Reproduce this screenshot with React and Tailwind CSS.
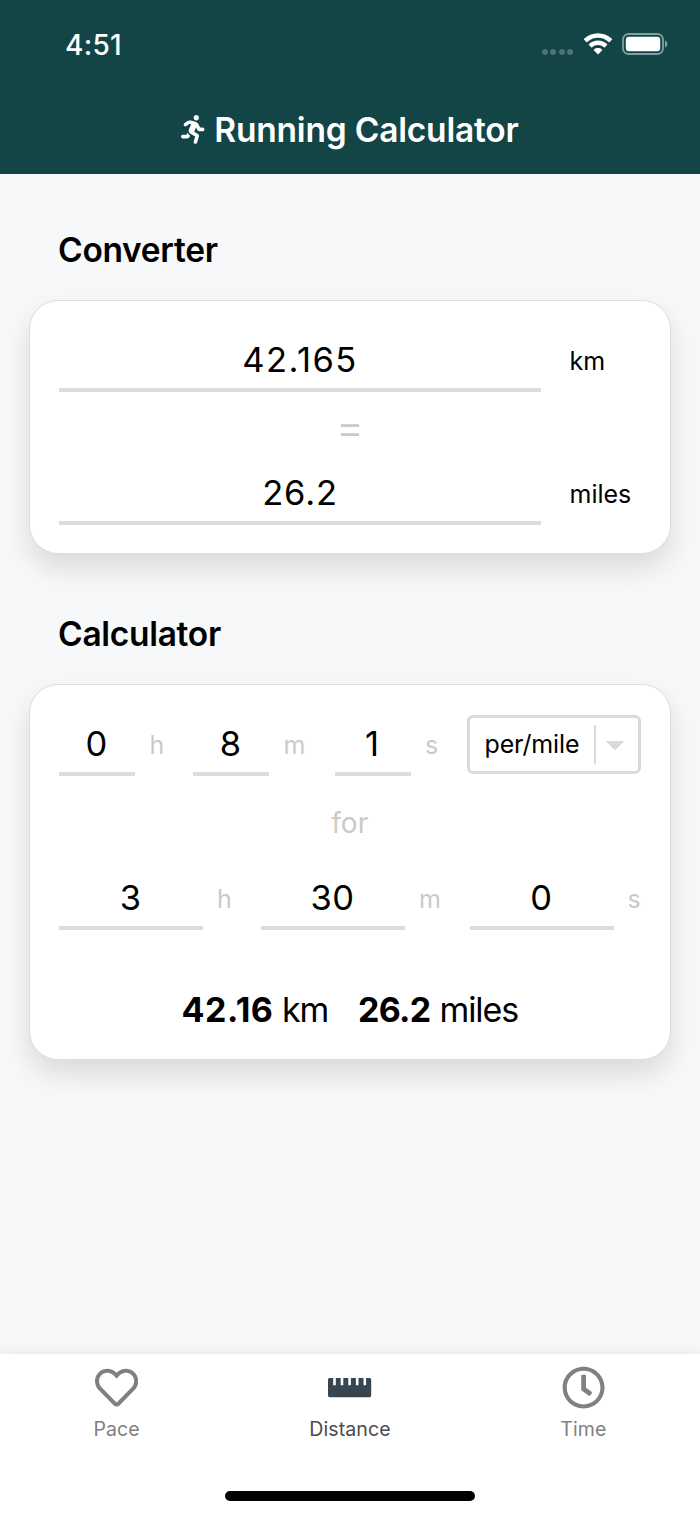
import React from "react";
import { FaRunning, FaRegHeart, FaRegClock } from "react-icons/fa";

function StatusBar() {
  return (
    <div className="flex h-[86px] items-start justify-between pt-[30px] pl-[65px] pr-[32px]">
      <span className="text-[28px] leading-[30px] font-medium tracking-[0.3px]">4:51</span>
      <div className="flex h-[28px] items-center">
        <div className="mr-[10px] mt-[15px] flex gap-[2.3px]">
          {[0, 1, 2, 3].map((i) => (
            <span key={i} className="size-[6px] rounded-full bg-[#4d7475]" />
          ))}
        </div>
        <svg className="mr-[9px] h-[22px] w-[30px]" viewBox="0 0 30 22" fill="#fff">
          <path d="M15 0.2c5.5 0 10.3 2.1 13.9 5.6.3.3.3.7 0 1l-2.200 2.300c-.3.3-.7.3-1 0C22.700 6.300 19 4.800 15 4.800S7.300 6.300 4.300 9.100c-.3.3-.7.3-1 0L1.100 6.800c-.3-.3-.3-.7 0-1C4.700 2.300 9.500.2 15 .2z" />
          <path d="M15 7.600c3.500 0 6.600 1.300 9 3.500.3.3.3.7 0 1l-2.200 2.200c-.3.3-.7.3-1 0-1.600-1.400-3.600-2.200-5.800-2.200s-4.200.8-5.800 2.200c-.3.3-.7.300-1 0L6 12.100c-.3-.3-.3-.7 0-1 2.400-2.200 5.500-3.500 9-3.500z" />
          <path d="M15 15c1.500 0 2.900.5 4 1.400.3.3.3.700 0 1l-3.500 3.600c-.3.3-.7.3-1 0L11 17.400c-.3-.3-.3-.7 0-1 1.100-.9 2.500-1.400 4-1.400z" />
        </svg>
        <svg className="h-[22px] w-[46px]" viewBox="0 0 46 22">
          <rect x="1" y="1" width="40" height="20" rx="5.500" fill="none" stroke="#80a0a1" strokeWidth="1.800" />
          <rect x="3.800" y="3.800" width="34.400" height="14.400" rx="3.200" fill="#fff" />
          <path d="M43 7.500c1.500.6 2.400 2 2.400 3.500s-.9 2.900-2.400 3.500z" fill="#80a0a1" />
        </svg>
      </div>
    </div>
  );
}

function RulerIcon({ className }) {
  return (
    <svg className={className} viewBox="0 0 43.2 43.2" fill="currentColor">
      <path d="M1.600 12H5.200V19.200H7.800V12H12.700V19.200H15.300V12H20.300V19.200H22.900V12H27.900V19.200H30.500V12H35.500V19.200H38.100V12H41.600a1.600 1.600 0 0 1 1.600 1.600V29.600a1.600 1.600 0 0 1-1.600 1.600H1.600a1.600 1.600 0 0 1-1.600-1.600V13.600a1.600 1.600 0 0 1 1.600-1.600z" />
    </svg>
  );
}

function Input({ value, className }) {
  return (
    <div className={`flex h-[61px] items-center justify-center border-b-4 border-[#dcdcdc] text-[34.500px] ${className}`}>
      {value}
    </div>
  );
}

function Unit({ children, className }) {
  return <span className={`flex h-[60px] items-center justify-center pt-[3px] text-[25px] text-[#cacaca] ${className}`}>{children}</span>;
}

function Title({ children }) {
  return <h2 className="ml-[58px] h-[48px] text-[33.500px] leading-[48px] font-semibold tracking-[-0.3px]">{children}</h2>;
}

function Card({ children, className }) {
  return (
    <section className={`mr-[29.500px] ml-[29px] rounded-[29px] border border-[#dadcde] bg-white px-[29px] shadow-[0_14px_28px_rgba(0,0,0,0.12)] ${className}`}>
      {children}
    </section>
  );
}

function Tab({ icon: Icon, label, color, iconColor }) {
  return (
    <div className={`flex flex-1 flex-col items-center pt-[12px] ${color}`}>
      <Icon className={`h-[43.200px] w-[43.200px] ${iconColor}`} />
      <span className="mt-[6px] text-[19.500px] leading-[28px] tracking-[0.1px]">{label}</span>
    </div>
  );
}

export default function App() {
  return (
    <div className="flex h-[1515px] w-[700px] flex-col overflow-hidden bg-[#f6f8fa] font-['Inter',sans-serif] text-black">
      <header className="h-[174px] bg-[#134547] text-white">
        <StatusBar />
        <div className="flex h-[88px] items-center justify-center">
          <FaRunning className="mb-px h-[28.800px] w-[23.400px]" />
          <h1 className="ml-[9.500px] text-[33.500px] leading-[40px] font-semibold tracking-[-0.2px]">Running Calculator</h1>
        </div>
      </header>

      <main className="flex-1 pt-[52px]">
        <Title>Converter</Title>
        <Card className="mt-[26px] h-[253.500px] pt-[30px]">
          <div className="flex">
            <Input value="42.165" className="w-[482px] tracking-[1.500px]" />
            <span className="ml-[28.500px] flex h-[61px] items-center text-[25px]">km</span>
          </div>
          <div className="flex h-[72px] items-center justify-center text-[44px] leading-[72px] font-light text-[#cacaca]">
            <span className="-mt-[3px]">=</span>
          </div>
          <div className="flex">
            <Input value="26.2" className="w-[482px] tracking-[0.800px]" />
            <span className="ml-[28.500px] flex h-[61px] items-center text-[25px]">miles</span>
          </div>
        </Card>

        <div className="h-[56.500px]" />
        <Title>Calculator</Title>
        <Card className="mt-[26px] h-[375.500px] pt-[29.500px]">
          <div className="flex">
            <Input value="0" className="w-[76px] pt-[2px] pr-px" />
            <Unit className="mx-[15px] w-[14px]">h</Unit>
            <Input value="8" className="ml-[14px] w-[76px] pt-[2px] pr-px" />
            <Unit className="mx-[15px] w-[21px]">m</Unit>
            <Input value="1" className="ml-[14.500px] w-[76px] pt-[2px] pr-px" />
            <Unit className="ml-[15px] w-[12px]">s</Unit>
            <div className="mt-[0.500px] ml-[29px] flex h-[59px] w-[174px] items-center rounded-[6px] border-[3.500px] border-[#dadada]">
              <span className="ml-[15px] w-[109px] pt-px text-[25px] tracking-[-0.150px]">per/mile</span>
              <span className="h-[39px] w-[2px] bg-[#dadada]" />
              <svg className="mt-px ml-[10px] h-[9px] w-[18px]" viewBox="0 0 18 9">
                <path d="M1 0h16c.7 0 .9.6.5 1L9.700 8.600c-.4.4-1 .4-1.400 0L.5 1C.1.6.3 0 1 0z" fill="#dadada" />
              </svg>
            </div>
          </div>
          <div className="flex h-[93px] items-center justify-center pt-px text-[28px] text-[#cacaca]">for</div>
          <div className="flex">
            <Input value="3" className="w-[144px] pt-[2px] pr-px" />
            <Unit className="ml-[14px] w-[15px]">h</Unit>
            <Input value="30" className="ml-[29px] w-[144px] pt-[2px] pr-px tracking-[0.500px]" />
            <Unit className="ml-[14px] w-[22px]">m</Unit>
            <Input value="0" className="ml-[29px] w-[143.500px] pt-[2px] pr-px" />
            <Unit className="ml-[14.500px] w-[12px]">s</Unit>
          </div>
          <div className="mt-[58px] flex justify-center gap-[30px] text-[34px] leading-[44px]">
            <span className="flex gap-[8.500px]">
              <b className="font-bold tracking-[0.500px]">42.16</b>
              <span className="tracking-[-1.200px]">km</span>
            </span>
            <span className="flex gap-[9px]">
              <b className="font-bold tracking-[-0.700px]">26.2</b>
              <span className="tracking-[-1.100px]">miles</span>
            </span>
          </div>
        </Card>
      </main>

      <nav className="flex h-[161px] flex-col items-center bg-white shadow-[0_-2px_12px_rgba(0,0,0,0.07)]">
        <div className="flex w-full">
          <Tab icon={FaRegHeart} label="Pace" color="text-[#808080]" />
          <Tab icon={RulerIcon} label="Distance" color="text-[#484b50]" iconColor="text-[#36454f]" />
          <Tab icon={FaRegClock} label="Time" color="text-[#808080]" />
        </div>
        <div className="mt-[48px] h-[9.500px] w-[250px] rounded-full bg-black" />
      </nav>
    </div>
  );
}
